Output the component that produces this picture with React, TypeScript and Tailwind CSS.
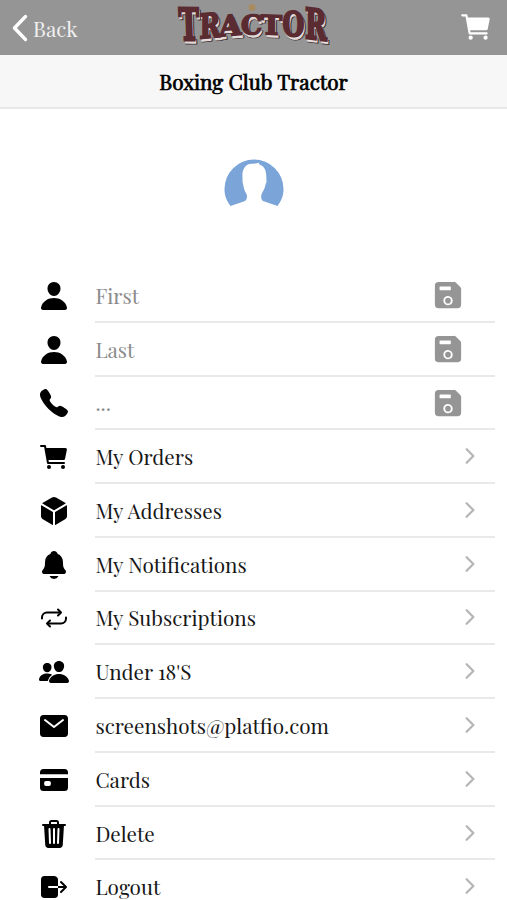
import type { ReactNode } from 'react';
import type { IconType } from 'react-icons';
import {
  IoCall,
  IoCard,
  IoCart,
  IoChevronForward,
  IoCube,
  IoLogOut,
  IoMail,
  IoNotifications,
  IoPeople,
  IoPerson,
  IoRepeat,
  IoSave,
  IoTrash,
} from 'react-icons/io5';

interface MenuItem {
  label: string;
  icon: IconType;
}

const fields: MenuItem[] = [
  { label: 'First', icon: IoPerson },
  { label: 'Last', icon: IoPerson },
  { label: '...', icon: IoCall },
];

const links: MenuItem[] = [
  { label: 'My Orders', icon: IoCart },
  { label: 'My Addresses', icon: IoCube },
  { label: 'My Notifications', icon: IoNotifications },
  { label: 'My Subscriptions', icon: IoRepeat },
  { label: "Under 18'S", icon: IoPeople },
  { label: 'screenshots@platfio.com', icon: IoMail },
  { label: 'Cards', icon: IoCard },
  { label: 'Delete', icon: IoTrash },
  { label: 'Logout', icon: IoLogOut },
];

// x, baseline, x/y scale and slope of every letter in the arched wordmark
const logoLetters = [
  { char: 'T', x: 14.5, y: 40, sx: 0.82, sy: 1.34, slope: 1, skew: 2 },
  { char: 'R', x: 34.5, y: 38.5, sx: 0.76, sy: 1.02, slope: -5, skew: 0 },
  { char: 'A', x: 54, y: 36.5, sx: 0.87, sy: 0.86, slope: -5, skew: 0 },
  { char: 'C', x: 76, y: 34.5, sx: 0.8, sy: 0.8, slope: -2, skew: 0 },
  { char: 'T', x: 96, y: 34, sx: 0.86, sy: 0.8, slope: 2, skew: 0 },
  { char: 'O', x: 117.5, y: 35.5, sx: 0.76, sy: 1.02, slope: 3, skew: 0 },
  { char: 'R', x: 140, y: 38, sx: 0.79, sy: 1.27, slope: 7, skew: 0 },
];

function LogoLayer({ className, dx = 0, dy = 0 }: { className: string; dx?: number; dy?: number }) {
  return (
    <g className={className} transform={`translate(${dx} ${dy})`}>
      {logoLetters.map(({ char, x, y, sx, sy, slope, skew }, i) => (
        <text
          key={i}
          fontSize={33}
          transform={`translate(${x} ${y}) skewY(${slope}) skewX(${skew}) scale(${sx} ${sy})`}
        >
          {char}
        </text>
      ))}
    </g>
  );
}

function Logo() {
  return (
    <svg
      viewBox="0 0 180 54"
      className="h-[54px] w-[180px] overflow-visible font-['DejaVu_Serif',serif] font-bold"
      aria-label="Tractor"
    >
      <circle cx="87" cy="7.5" r="3.5" fill="#a98b60" />
      <LogoLayer className="fill-[#3d3235] stroke-[#3d3235] stroke-2" dx={1.8} dy={3} />
      <LogoLayer className="fill-[#e5dedc] stroke-[#e5dedc] stroke-1" dx={1} dy={2.8} />
      <LogoLayer className="fill-[#5a2b31] stroke-[#5a2b31] stroke-2" />
    </svg>
  );
}

function Avatar() {
  return (
    <svg viewBox="0 0 60 54" className="mt-[50px] h-[54px] w-[60px]" fill="#7ba5d8">
      <path d="M6.5 47C2.8 42 0.5 37 0.5 30A29.5 29.5 0 0 1 59.5 30C59.5 37 57.2 42 53.5 47C49 45 43.5 44 39 42C36.8 40 36.8 37 37.8 34.5C39.5 31.5 41 29 41.5 25.5L42.5 23L42.3 17C42.2 11 40 7 35.5 5.5L34.5 3.5C33 5.5 26 3.5 22.5 6.5C18.5 9.5 18.2 15 18.5 19L18.5 23L19.3 26C19.8 30 20.8 32 22.5 35C23.5 38 23.2 40 21 42C17 44 11 45 6.5 47Z" />
    </svg>
  );
}

function Row({ item, muted, children }: { item: MenuItem; muted?: boolean; children: ReactNode }) {
  const Icon = item.icon;
  return (
    <li className="flex h-[53.77px] items-stretch pl-[38px] pr-3">
      <div className="flex w-[57.4px] shrink-0 items-center">
        <Icon size={32} />
      </div>
      <div className="flex flex-1 items-center justify-between border-b-2 border-[#e9e9e9]">
        <span
          className={`pt-0.5 text-[20.7px] leading-7 whitespace-nowrap ${muted ? 'text-[#8b8b8b]' : 'text-[#171717]'}`}
        >
          {item.label}
        </span>
        {children}
      </div>
    </li>
  );
}

export default function App() {
  return (
    <div className="h-[900px] w-[507px] overflow-hidden bg-white font-['Playfair_Display','Liberation_Serif',serif] text-black">
      <header className="flex h-[54.5px] items-center justify-between bg-[#959595] text-white">
        <button className="flex w-[165px] items-center gap-[5px] pl-3">
          <svg viewBox="0 0 16 28" className="mt-0.5 h-7 w-4" fill="none" stroke="currentColor" strokeWidth="3.4" strokeLinecap="round" strokeLinejoin="round">
            <path d="M13.5 2.5L2.5 14L13.5 25.5" />
          </svg>
          <span className="pt-[3px] text-[20.7px] leading-7 text-[#f0f0f0]">Back</span>
        </button>
        <Logo />
        <button className="flex w-[162px] justify-end pr-[14px]">
          <IoCart size={34} />
        </button>
      </header>
      <h1 className="flex h-[54.5px] items-center justify-center border-b-2 border-[#e8e8e8] bg-[#f7f7f7] pt-0.5 text-[20.8px] font-normal [-webkit-text-stroke:0.7px_#000]">
        Boxing Club Tractor
      </h1>
      <div className="flex h-[160px] justify-center">
        <Avatar />
      </div>
      <ul>
        {fields.map((item) => (
          <Row key={item.label} item={item} muted>
            <IoSave size={30} className="mt-px mr-8 text-[#959595]" />
          </Row>
        ))}
        {links.map((item) => (
          <Row key={item.label} item={item}>
            <IoChevronForward size={24} className="mr-[13px] text-[#b5b5b5]" />
          </Row>
        ))}
      </ul>
    </div>
  );
}
